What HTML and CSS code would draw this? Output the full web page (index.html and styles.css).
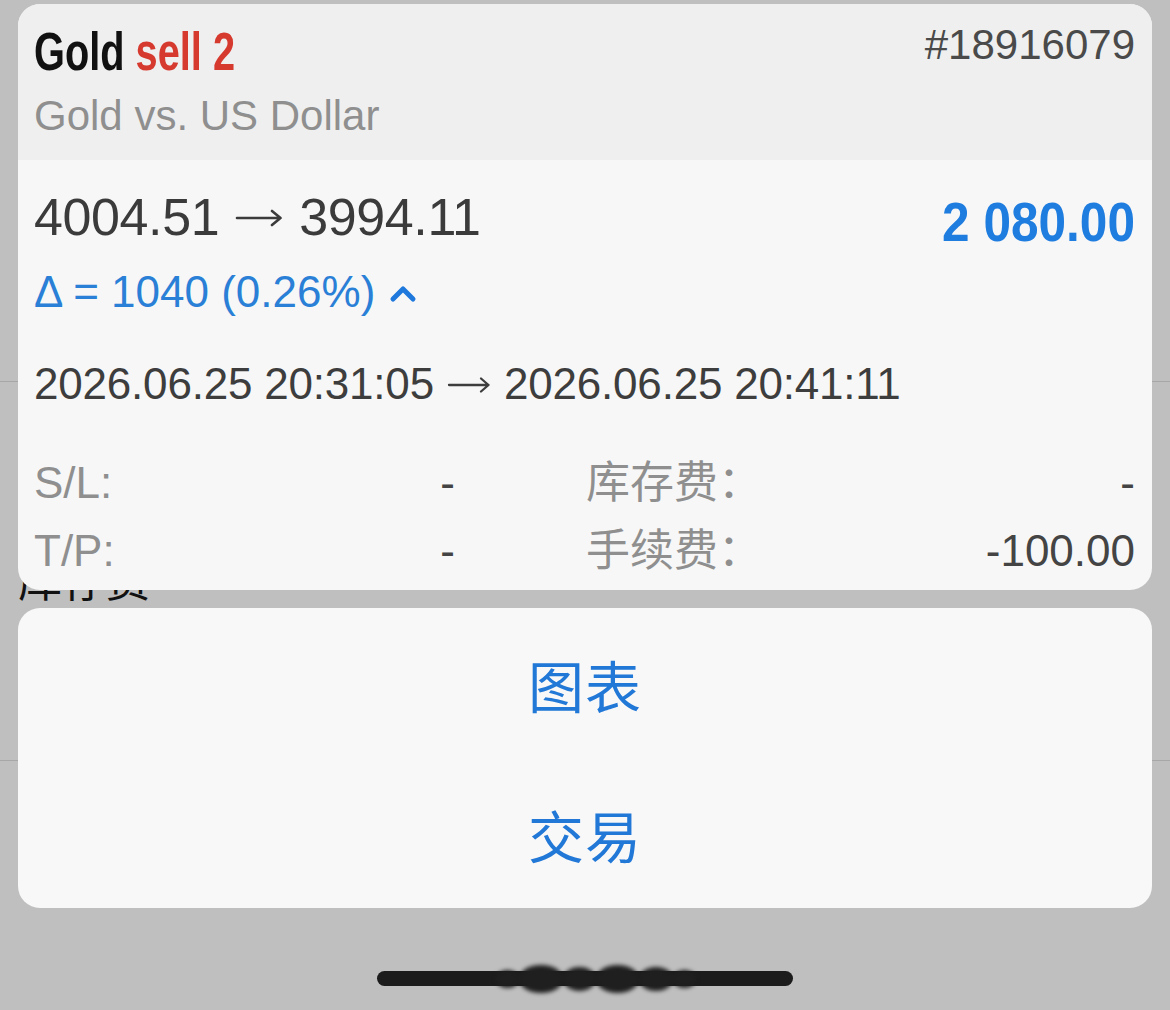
FILE: index.html
```html
<!DOCTYPE html>
<html lang="zh">
<head>
<meta charset="utf-8">
<title>Gold sell 2</title>
<link rel="stylesheet" href="styles.css">
</head>
<body>
<div class="under" aria-hidden="true">
  <div class="under-top"><span>Gold 11 - 0000007</span><span>Ln 00000 01 000000</span></div>
  <div class="under-line l1"></div>
  <div class="under-text">库存费</div>
  <div class="under-line l2"></div>
</div>

<main class="sheet">
  <section class="card info">
    <header class="info-head">
      <div class="title-row">
        <h1 class="title"><span class="sym">Gold</span> <span class="side">sell 2</span></h1>
        <div class="ticket">#18916079</div>
      </div>
      <div class="desc">Gold vs. US Dollar</div>
    </header>
    <div class="info-body">
      <div class="price-row">
        <div class="prices">4004.51 <svg class="arrow big" width="48" height="20" viewBox="0 0 48 20"><path d="M2 10H45.5M37 3L45.5 10L37 17" fill="none" stroke="currentColor" stroke-width="2.6" stroke-linecap="round" stroke-linejoin="round"/></svg> 3994.11</div>
        <div class="profit">2 080.00</div>
      </div>
      <div class="delta">Δ = 1040 (0.26%)
        <svg class="chev" width="28" height="20" viewBox="0 0 28 20"><polyline points="4,15 14,5 24,15" fill="none" stroke="currentColor" stroke-width="5" stroke-linecap="round" stroke-linejoin="round"/></svg>
      </div>
      <div class="times">2026.06.25 20:31:05 <svg class="arrow small" width="44" height="18" viewBox="0 0 44 18"><path d="M2 9H41.5M34 2.5L41.5 9L34 15.5" fill="none" stroke="currentColor" stroke-width="2.3" stroke-linecap="round" stroke-linejoin="round"/></svg> 2026.06.25 20:41:11</div>
      <div class="fields">
        <div class="pair left"><span class="lbl">S/L:</span><span class="val">-</span></div>
        <div class="pair right"><span class="lbl">库存费：</span><span class="val">-</span></div>
        <div class="pair left"><span class="lbl">T/P:</span><span class="val">-</span></div>
        <div class="pair right"><span class="lbl">手续费：</span><span class="val">-100.00</span></div>
      </div>
    </div>
  </section>

  <section class="card actions">
    <button class="action">图表</button>
    <button class="action">交易</button>
  </section>

  <div class="home-wrap">
    <div class="home-bar"></div>
    <div class="smudge"><i></i><i></i><i></i><i></i><i></i><i></i></div>
  </div>
</main>
</body>
</html>
```

FILE: styles.css
```css
* { box-sizing: border-box; }

html, body {
  margin: 0;
  padding: 0;
}

body {
  width: 1170px;
  height: 1010px;
  overflow: hidden;
  position: relative;
  background: #bfbfbf;
  font-family: "Liberation Sans", "Noto Sans CJK SC", sans-serif;
  color: #3d3d3d;
}

/* dimmed page behind the sheet */
.under {
  position: absolute;
  inset: 0;
  z-index: 0;
}

.under-top {
  position: absolute;
  left: 20px;
  right: 20px;
  top: -44px;
  display: flex;
  justify-content: space-between;
  font-size: 44px;
  line-height: 50px;
  color: #222;
}

.under-line {
  position: absolute;
  left: 0;
  right: 0;
  height: 1px;
  background: #a7a7a7;
}
.under-line.l1 { top: 381px; }
.under-line.l2 { top: 760px; }

.under-text {
  position: absolute;
  left: 18px;
  top: 552px;
  font-size: 44px;
  line-height: 52px;
  color: #111;
  font-family: "Noto Sans CJK SC", sans-serif;
}

.sheet {
  position: relative;
  z-index: 1;
  padding: 4px 18px 0;
  display: flex;
  flex-direction: column;
  gap: 18px;
}

.card {
  border-radius: 22px;
  overflow: hidden;
}

/* info card */
.info {
  height: 586px;
  background: #f7f7f7;
}

.info-head {
  height: 156px;
  background: #efefef;
  padding: 19px 17px 0 16px;
}

.title-row {
  display: flex;
  justify-content: space-between;
  align-items: flex-start;
}

.title {
  margin: 0;
  font-size: 53px;
  line-height: 58px;
  font-weight: 700;
  white-space: nowrap;
  display: inline-block;
  transform: scaleX(0.75);
  transform-origin: left center;
}
.sym { color: #111; }
.side { color: #d63a2f; }

.ticket {
  font-size: 42px;
  line-height: 48px;
  color: #4a4a4a;
  margin-top: -2px;
}

.desc {
  margin-top: 11px;
  font-size: 42px;
  line-height: 48px;
  color: #8f8f8f;
}

.info-body {
  padding: 27px 17px 0 16px;
}

.price-row {
  display: flex;
  justify-content: space-between;
  align-items: flex-start;
}

.prices {
  font-size: 52px;
  line-height: 60px;
  color: #3b3b3b;
  white-space: nowrap;
  letter-spacing: -0.4px;
}

.arrow {
  display: inline-block;
  vertical-align: middle;
}
.arrow.big {
  margin: -6px 2px 0;
}
.arrow.small {
  margin: -5px 1px 0;
}

.profit {
  margin-top: 5px;
  font-size: 56px;
  line-height: 60px;
  font-weight: 700;
  color: #1f7de0;
  display: inline-block;
  transform: scaleX(0.885);
  transform-origin: right center;
  white-space: nowrap;
}

.delta {
  margin-top: 14px;
  font-size: 44px;
  line-height: 52px;
  color: #2a7fd6;
  display: flex;
  align-items: center;
  gap: 14px;
}

.chev {
  color: #1f78dc;
  margin-top: 4px;
}

.times {
  margin-top: 40px;
  font-size: 44px;
  line-height: 52px;
  color: #3d3d3d;
  white-space: nowrap;
  letter-spacing: -0.2px;
}

.fields {
  margin-top: 47px;
  display: grid;
  grid-template-columns: 421px 549px;
  column-gap: 131px;
  row-gap: 16px;
  font-size: 44px;
  line-height: 52px;
}

.pair {
  display: flex;
  justify-content: space-between;
}

.lbl { color: #8f8f8f; }
.val { color: #444; }

/* action card */
.actions {
  height: 300px;
  background: #f8f8f9;
  display: flex;
  flex-direction: column;
}

.action {
  flex: 1;
  border: 0;
  background: transparent;
  padding: 0;
  font-family: "Noto Sans CJK SC", sans-serif;
  font-size: 56px;
  color: #2278d6;
  letter-spacing: 1px;
}

/* home indicator */
.home-wrap {
  position: relative;
  margin-top: 45px;
  height: 15px;
  display: flex;
  justify-content: center;
}

.home-bar {
  width: 416px;
  height: 15px;
  border-radius: 8px;
  background: #1c1c1c;
}

.smudge {
  position: absolute;
  left: 478px;
  top: -6px;
  width: 200px;
  height: 28px;
  display: flex;
  gap: 0;
  align-items: center;
  filter: blur(2px);
}
.smudge i {
  display: block;
  flex: 1;
  height: 24px;
  border-radius: 50%;
  background: #1f1f1f;
}
.smudge i:nth-child(2), .smudge i:nth-child(4) { height: 28px; flex: 1.3; }
.smudge i:first-child, .smudge i:last-child { height: 18px; flex: 0.7; }
```
